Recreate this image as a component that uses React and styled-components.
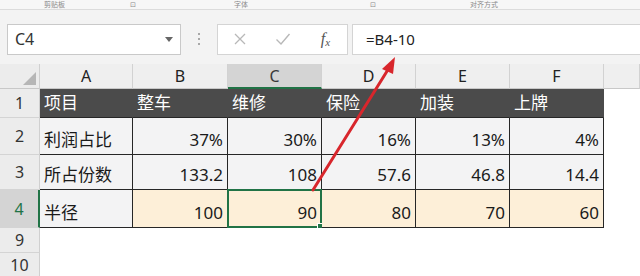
import React from 'react';
import styled, { createGlobalStyle } from 'styled-components';

const Global = createGlobalStyle`
  html, body { margin: 0; padding: 0; background: #ffffff; }
  body { font-family: "Noto Sans", "Noto Sans CJK SC", sans-serif; }
`;

const Page = styled.div`
  position: relative;
  width: 640px;
  height: 276px;
  overflow: hidden;
  background: #ffffff;
`;

// ribbon group labels, tiny strip at the top
const Ribbon = styled.div`
  height: 9px;
  background: #f7f7f7;
  border-bottom: 1px solid #dcdcdc;
  box-shadow: 0 1px 2px rgba(0, 0, 0, 0.08);
  display: flex;
  align-items: center;
  overflow: hidden;
`;

const RibbonLabel = styled.span`
  width: ${p => p.w}px;
  flex: none;
  padding-left: ${p => p.pad || 0}px;
  box-sizing: border-box;
  font-family: "Noto Sans CJK SC", sans-serif;
  font-size: 7px;
  line-height: 9px;
  color: #8a8a8a;
  white-space: nowrap;
`;

const Toolbar = styled.div`
  height: 54px;
  background: #f3f3f3;
  display: flex;
  align-items: center;
  padding: 0 0 0 7px;
  box-sizing: border-box;
`;

const NameBox = styled.div`
  width: 174px;
  height: 31px;
  box-sizing: border-box;
  background: #fff;
  border: 1px solid #c9c9c9;
  display: flex;
  align-items: center;
  justify-content: space-between;
  padding: 0 7px 0 7px;
  font-size: 16px;
  color: #333;
  margin-top: 4px;
`;

const DropArrow = styled.span`
  width: 0;
  height: 0;
  border-left: 4px solid transparent;
  border-right: 4px solid transparent;
  border-top: 5px solid #666;
`;

const Dots = styled.div`
  width: 36px;
  display: flex;
  flex-direction: column;
  align-items: center;
  gap: 3px;
  margin-top: 4px;
  span {
    width: 2px;
    height: 2px;
    background: #a8a8a8;
  }
`;

const FormulaButtons = styled.div`
  width: 131px;
  height: 31px;
  box-sizing: border-box;
  background: #fff;
  border: 1px solid #d4d4d4;
  display: flex;
  align-items: center;
  margin-top: 4px;
`;

const FxButton = styled.span`
  width: 43px;
  display: flex;
  justify-content: center;
  align-items: baseline;
  color: ${p => p.muted ? '#bcbcbc' : '#555'};
  font-family: "Liberation Serif", serif;
  font-style: italic;
  font-size: 16px;
`;

const FxSub = styled.span`
  font-size: 11px;
  position: relative;
  top: 2px;
`;

const FormulaInput = styled.div`
  flex: 1;
  height: 31px;
  box-sizing: border-box;
  background: #fff;
  border: 1px solid #d4d4d4;
  border-right: none;
  margin-left: 4px;
  margin-top: 4px;
  display: flex;
  align-items: center;
  padding-left: 13px;
  font-size: 15px;
  color: #222;
`;

const Sheet = styled.div`
  display: grid;
  grid-template-columns: 40px 93px 95px 94px 94px 94px 94px 1fr;
  grid-template-rows: 25px 29px 37px 35px 38px 25px 25px;
`;

const Corner = styled.div`
  background: #ececec;
  border-right: 1px solid #d0d0d0;
  border-bottom: 1px solid #c8c8c8;
  position: relative;
  &::after {
    content: '';
    position: absolute;
    right: 3px;
    bottom: 3px;
    width: 0;
    height: 0;
    border-left: 13px solid transparent;
    border-bottom: 13px solid #b6b6b6;
  }
`;

const ColHead = styled.div`
  background: ${p => p.selected ? '#d4d4d4' : '#efefef'};
  border-right: 1px solid #d2d2d2;
  border-bottom: ${p => p.selected ? '2px solid #217346' : '1px solid #c8c8c8'};
  display: flex;
  align-items: center;
  justify-content: center;
  font-size: 16px;
  color: ${p => p.selected ? '#3a3a3a' : '#222'};
`;

const RowHead = styled.div`
  background: ${p => p.selected ? '#d4d4d4' : '#ececec'};
  border-right: ${p => p.selected ? '2px solid #217346' : '1px solid #d0d0d0'};
  border-bottom: 1px solid #d4d4d4;
  display: flex;
  align-items: center;
  justify-content: center;
  font-size: 16px;
  color: ${p => p.selected ? '#217346' : '#333'};
  box-sizing: border-box;
`;

const fills = {
  dark: '#4b4b4b',
  body: '#f3f3f4',
  orange: '#fdefd8',
  empty: '#ffffff',
};

const Cell = styled.div`
  position: relative;
  background: ${p => fills[p.kind]};
  border-right: ${p => p.kind === 'empty' ? 'none' : p.kind === 'dark' ? '1px solid #4b4b4b' : '1px solid #262626'};
  border-bottom: ${p => p.kind === 'empty' ? 'none' : '1px solid #262626'};
  display: flex;
  align-items: flex-end;
  justify-content: ${p => p.right ? 'flex-end' : 'flex-start'};
  padding: 0 4px 3px 4px;
  box-sizing: border-box;
  font-family: "Noto Sans", "Noto Sans CJK SC", sans-serif;
  font-size: 17px;
  line-height: 22px;
  color: ${p => p.kind === 'dark' ? '#ffffff' : '#1a1a1a'};
  white-space: nowrap;
`;

const Active = styled.div`
  position: absolute;
  left: -1px;
  top: -1px;
  right: -1px;
  bottom: -1px;
  border: 2px solid #217346;
  pointer-events: none;
  &::after {
    content: '';
    position: absolute;
    right: -4px;
    bottom: -4px;
    width: 5px;
    height: 5px;
    background: #217346;
    border: 1px solid #fff;
  }
`;

const Arrow = styled.svg`
  position: absolute;
  left: 0;
  top: 0;
  pointer-events: none;
`;

const columns = ['A', 'B', 'C', 'D', 'E', 'F', ''];

const rows = [
  { n: '1', kind: 'dark', cells: ['项目', '整车', '维修', '保险', '加装', '上牌'] },
  { n: '2', kind: 'body', cells: ['利润占比', '37%', '30%', '16%', '13%', '4%'] },
  { n: '3', kind: 'body', cells: ['所占份数', '133.2', '108', '57.6', '46.8', '14.4'] },
  { n: '4', kind: 'orange', cells: ['半径', '100', '90', '80', '70', '60'] },
];

export default function App() {
  return (
    <Page>
      <Global />
      <Ribbon>
        <RibbonLabel w={130} pad={44}>剪贴板</RibbonLabel>
        <RibbonLabel w={100}>⊡</RibbonLabel>
        <RibbonLabel w={140} pad={4}>字体</RibbonLabel>
        <RibbonLabel w={100}>⊡</RibbonLabel>
        <RibbonLabel w={120}>对齐方式</RibbonLabel>
      </Ribbon>
      <Toolbar>
        <NameBox>
          C4
          <DropArrow />
        </NameBox>
        <Dots><span /><span /><span /></Dots>
        <FormulaButtons>
          <FxButton muted>
            <svg width="14" height="14" viewBox="0 0 14 14">
              <path d="M2 2 L12 12 M12 2 L2 12" stroke="#b8b8b8" strokeWidth="1.3" fill="none" />
            </svg>
          </FxButton>
          <FxButton muted>
            <svg width="16" height="14" viewBox="0 0 16 14">
              <path d="M1.5 7.5 L6 12 L14.5 2" stroke="#b8b8b8" strokeWidth="1.4" fill="none" />
            </svg>
          </FxButton>
          <FxButton>f<FxSub>x</FxSub></FxButton>
        </FormulaButtons>
        <FormulaInput>=B4-10</FormulaInput>
      </Toolbar>
      <Sheet>
        <Corner />
        {columns.map((c, i) => (
          <ColHead key={i} selected={c === 'C'}>{c}</ColHead>
        ))}
        {rows.map(r => (
          <React.Fragment key={r.n}>
            <RowHead selected={r.n === '4'}>{r.n}</RowHead>
            {r.cells.map((v, i) => {
              const kind = r.kind === 'orange' && i === 0 ? 'body' : r.kind;
              return (
                <Cell key={i} kind={kind} right={i > 0 && r.kind !== 'dark'}>
                  {v}
                  {r.n === '4' && i === 2 && <Active />}
                </Cell>
              );
            })}
            <Cell kind="empty" />
          </React.Fragment>
        ))}
        {['9', '10'].map(n => (
          <React.Fragment key={n}>
            <RowHead>{n}</RowHead>
            {columns.map((c, i) => <Cell key={i} kind="empty" />)}
          </React.Fragment>
        ))}
      </Sheet>
      <Arrow width="640" height="276" viewBox="0 0 640 276">
        <line x1="313" y1="190" x2="389" y2="68" stroke="#d8262c" strokeWidth="3" strokeLinecap="round" />
        <polygon points="395,57 382,69 393,74" fill="#d8262c" />
      </Arrow>
    </Page>
  );
}
